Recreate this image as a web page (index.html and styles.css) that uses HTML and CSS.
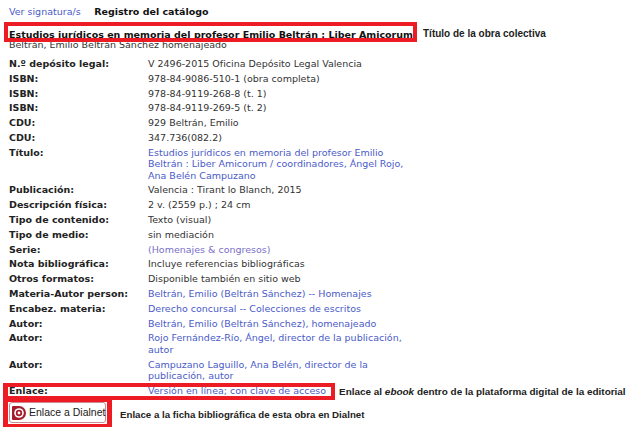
FILE: index.html
```html
<!DOCTYPE html>
<html lang="es">
<head>
<meta charset="utf-8">
<title>Registro del catálogo</title>
<link rel="stylesheet" href="styles.css">
</head>
<body>
<div class="page">
  <div class="top">
    <a class="link" href="#">Ver signatura/s</a>
    <strong class="heading">Registro del catálogo</strong>
  </div>
  <div class="title">Estudios jurídicos en memoria del profesor Emilio Beltrán : Liber Amicorum</div>
  <div class="author">Beltrán, Emilio Beltrán Sánchez homenajeado</div>
  <div class="record">
    <b>N.º depósito legal:</b><span>V 2496-2015 Oficina Depósito Legal Valencia</span>
    <b>ISBN:</b><span>978-84-9086-510-1 (obra completa)</span>
    <b>ISBN:</b><span>978-84-9119-268-8 (t. 1)</span>
    <b>ISBN:</b><span>978-84-9119-269-5 (t. 2)</span>
    <b>CDU:</b><span>929 Beltrán, Emilio</span>
    <b>CDU:</b><span>347.736(082.2)</span>
    <b>Título:</b><a class="link" href="#">Estudios jurídicos en memoria del profesor Emilio Beltrán : Liber Amicorum / coordinadores, Ángel Rojo, Ana Belén Campuzano</a>
    <b>Publicación:</b><span>Valencia : Tirant lo Blanch, 2015</span>
    <b>Descripción física:</b><span>2 v. (2559 p.) ; 24 cm</span>
    <b>Tipo de contenido:</b><span>Texto (visual)</span>
    <b>Tipo de medio:</b><span>sin mediación</span>
    <b>Serie:</b><a class="link serie" href="#">(Homenajes &amp; congresos)</a>
    <b>Nota bibliográfica:</b><span>Incluye referencias bibliográficas</span>
    <b>Otros formatos:</b><span>Disponible también en sitio web</span>
    <b>Materia-Autor person:</b><a class="link" href="#">Beltrán, Emilio (Beltrán Sánchez) -- Homenajes</a>
    <b>Encabez. materia:</b><a class="link" href="#">Derecho concursal -- Colecciones de escritos</a>
    <b>Autor:</b><a class="link" href="#">Beltrán, Emilio (Beltrán Sánchez), homenajeado</a>
    <b>Autor:</b><a class="link" href="#">Rojo Fernández-Río, Ángel, director de la publicación, autor</a>
    <b>Autor:</b><a class="link" href="#">Campuzano Laguillo, Ana Belén, director de la publicación, autor</a>
    <b>Enlace:</b><a class="link" href="#">Versión en línea; con clave de acceso</a>
  </div>
  <div class="dialnet-row">
    <a class="dialnet" href="#">
      <svg class="dialnet-icon" viewBox="0 0 14 14" width="14" height="14" aria-hidden="true">
        <path d="M1 0H7A7 7 0 0 1 7 14H1A1 1 0 0 1 0 13V1A1 1 0 0 1 1 0Z" fill="#a51d2d"/>
        <circle cx="7" cy="7" r="4.8" fill="#fff"/>
        <circle cx="7" cy="7" r="3.2" fill="#a51d2d"/>
        <circle cx="7" cy="7" r="1.4" fill="#fff"/>
      </svg>
      <span>Enlace a Dialnet</span>
    </a>
  </div>
  <div class="box box-title"></div>
  <div class="box box-link"></div>
  <div class="box box-dialnet"></div>
  <div class="note note-title">Título de la obra colectiva</div>
  <div class="note note-link">Enlace al <i>ebook</i> dentro de la plataforma digital de la editorial</div>
  <div class="note note-dialnet">Enlace a la ficha bibliográfica de esta obra en Dialnet</div>
</div>
</body>
</html>
```
FILE: styles.css
```css
html, body {
  margin: 0;
  padding: 0;
  background: #fff;
}
.page {
  position: relative;
  width: 640px;
  height: 428px;
  overflow: hidden;
  box-sizing: border-box;
  padding: 6px 0 0 9px;
  font-family: "DejaVu Sans", Verdana, sans-serif;
  font-size: 9.5px;
  line-height: 11.4px;
  color: #333;
}
.link {
  color: #4a5bc8;
  text-decoration: none;
}
.top {
  display: flex;
  gap: 13.5px;
  height: 14px;
}
.heading {
  color: #111;
}
.title {
  margin-top: 9px;
  font-weight: bold;
  color: #111;
  height: 11.4px;
  white-space: nowrap;
}
.author {
  margin-top: -1px;
}
.record {
  display: grid;
  grid-template-columns: 139px 262px;
  row-gap: 3.4px;
  margin-top: 7.2px;
}
.record b {
  color: #222;
}
.serie {
  color: #7a6fc8;
}
.dialnet-row {
  display: flex;
  margin-top: 6px;
}
.dialnet {
  display: flex;
  align-items: center;
  gap: 3px;
  box-sizing: border-box;
  width: 97px;
  height: 21px;
  padding-left: 2px;
  border: 1px solid #c98a90;
  border-radius: 3px;
  font-family: "Liberation Sans", Arial, sans-serif;
  font-size: 10.5px;
  line-height: 13px;
  color: #222;
  text-decoration: none;
  white-space: nowrap;
}
.dialnet-icon {
  flex: none;
}
.box {
  position: absolute;
  box-sizing: border-box;
  border: 4px solid #ed1c24;
}
.box-title {
  left: 4px;
  top: 22px;
  width: 413px;
  height: 20px;
}
.box-link {
  left: 3px;
  top: 383px;
  width: 332px;
  height: 17px;
  border-left-width: 5px;
}
.box-dialnet {
  left: 3px;
  top: 399px;
  width: 109px;
  height: 28px;
  border-width: 3px 5px 3px 5px;
}
.note {
  position: absolute;
  font-family: "Liberation Sans", Arial, sans-serif;
  font-size: 10px;
  font-weight: bold;
  line-height: 12px;
  color: #222;
  white-space: nowrap;
}
.note-title {
  left: 423px;
  top: 28px;
}
.note-link {
  left: 339px;
  top: 386px;
  font-size: 9.95px;
}
.note-dialnet {
  left: 120px;
  top: 409px;
  font-size: 9.7px;
}
```
